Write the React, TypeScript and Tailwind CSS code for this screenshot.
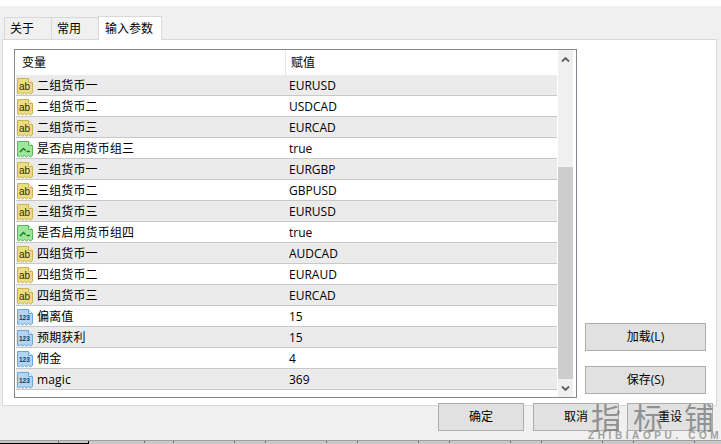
const ROWS: [string, string, string][] = [
  ['ab', '二组货币一', 'EURUSD'],
  ['ab', '二组货币二', 'USDCAD'],
  ['ab', '二组货币三', 'EURCAD'],
  ['bool', '是否启用货币组三', 'true'],
  ['ab', '三组货币一', 'EURGBP'],
  ['ab', '三组货币二', 'GBPUSD'],
  ['ab', '三组货币三', 'EURUSD'],
  ['bool', '是否启用货币组四', 'true'],
  ['ab', '四组货币一', 'AUDCAD'],
  ['ab', '四组货币二', 'EURAUD'],
  ['ab', '四组货币三', 'EURCAD'],
  ['num', '偏离值', '15'],
  ['num', '预期获利', '15'],
  ['num', '佣金', '4'],
  ['num', 'magic', '369'],
];

const TICKS = [58, 144, 173, 234, 265, 326, 357, 418, 449, 510, 541, 602, 633, 694];

const SHEET = 'M0.5 1.5H11.5L15.5 5.5V15.5L13.5 17L11.5 15.5L9.5 17L7.5 15.5L5.5 17L3.5 15.5L1.5 17L0.5 16Z';

function TypeIcon({ kind }: { kind: string }) {
  if (kind === 'bool') {
    return (
      <svg width="16" height="18" viewBox="0 0 16 18" className="shrink-0">
        <path d={SHEET} fill="#9fe59a" stroke="#58b765" />
        <path d="M11.5 1.5V5.5H15.5" fill="#e2f8df" stroke="#58b765" />
        <path d="M3 12L6.5 8.5L8.5 10.5" fill="none" stroke="#0d7a20" strokeWidth="1.4" />
        <path d="M9.5 11.5H13" fill="none" stroke="#0d7a20" strokeWidth="1.4" />
      </svg>
    );
  }
  const num = kind === 'num';
  return (
    <svg width="16" height="18" viewBox="0 0 16 18" className="shrink-0">
      <path d={SHEET} fill={num ? '#b3d5f2' : '#ecdd84'} stroke={num ? '#6aa8dc' : '#c9b450'} />
      <path d="M11.5 1.5V5.5H15.5" fill={num ? '#e6f2fb' : '#f8f2c8'} stroke={num ? '#6aa8dc' : '#c9b450'} />
      <text
        x="2"
        y={num ? 12 : 12.5}
        fontFamily="'Liberation Sans', sans-serif"
        fontSize={num ? 6.5 : 10}
        fontWeight={num ? 700 : 400}
        fill={num ? '#0f3c6a' : '#2f2a0c'}
      >
        {num ? '123' : 'ab'}
      </text>
    </svg>
  );
}

function Btn({ label, className }: { label: string; className: string }) {
  return (
    <button
      type="button"
      className={`h-[28px] border border-[#adadad] bg-[#e1e1e1] text-[12px] text-black ${className}`}
    >
      {label}
    </button>
  );
}

function Tab({ label, active, className }: { label: string; active?: boolean; className: string }) {
  return (
    <div
      className={`border border-b-0 border-[#d9d9d9] flex items-center text-[12px] text-black ${
        active ? 'h-[24px] bg-white relative z-10 -mb-px pl-[6px]' : 'h-[22px] bg-[#f0f0f0] pl-[5px]'
      } ${className}`}
    >
      {label}
    </div>
  );
}

function Chevron({ up }: { up?: boolean }) {
  return (
    <svg width="9" height="7" viewBox="0 0 9 7">
      <path d={up ? 'M1 5.5L4.5 2L8 5.5' : 'M1 1.5L4.5 5L8 1.5'} fill="none" stroke="#606060" strokeWidth="1.8" />
    </svg>
  );
}

export default function App() {
  return (
    <div className="relative w-[721px] h-[444px] overflow-hidden bg-white font-['Open_Sans','Noto_Sans_CJK_SC',sans-serif] flex flex-col">
      <div className="h-[6px] shrink-0 bg-white" />
      <div className="h-[434px] shrink-0 bg-[#f0f0f0] flex flex-col">
        <div className="h-[11px] shrink-0" />
        <div className="flex items-end pl-[4px] h-[22px] shrink-0">
          <Tab label="关于" className="w-[48px]" />
          <Tab label="常用" className="w-[48px] -ml-px" />
          <Tab label="输入参数" active className="w-[64px] -ml-px" />
        </div>
        <div className="ml-[2px] w-[715px] h-[367px] shrink-0 border border-[#d9d9d9] bg-white flex pt-[9px] pl-[11px]">
          <div className="w-[563px] h-[349px] shrink-0 border border-[#828790] bg-white flex pl-px">
            <div className="w-[541px] shrink-0 flex flex-col">
              <div className="h-[25px] shrink-0 flex text-[12px] text-black items-center">
                <div className="w-[270px] h-full pl-[6px] flex items-center border-r border-[#e5e5e5]">变量</div>
                <div className="pl-[5px]">赋值</div>
              </div>
              {ROWS.map(([kind, name, value], i) => (
                <div
                  key={i}
                  className={`h-[21px] shrink-0 flex items-center pt-px border-b border-[#c8c8c8] text-[12px] text-black ${
                    i % 2 === 0 ? 'bg-[#ebebeb]' : 'bg-white'
                  }`}
                >
                  <div className="w-[270px] pl-px flex items-center gap-[4px]">
                    <TypeIcon kind={kind} />
                    <span className="tracking-[0.15px]">{name}</span>
                  </div>
                  <div className="pl-[3px]">{value}</div>
                </div>
              ))}
            </div>
            <div className="w-[15px] ml-[1px] shrink-0 bg-[#f0f0f0] flex flex-col">
              <div className="h-[18px] shrink-0 flex items-center justify-center">
                <Chevron up />
              </div>
              <div className="h-[99px] shrink-0" />
              <div className="h-[212px] shrink-0 bg-[#cdcdcd]" />
              <div className="flex-1 flex items-center justify-center">
                <Chevron />
              </div>
            </div>
          </div>
          <div className="ml-[8px] flex flex-col gap-[15px] pt-[274px]">
            <Btn label="加载(L)" className="w-[121px]" />
            <Btn label="保存(S)" className="w-[121px]" />
          </div>
        </div>
        <div className="flex pl-[438px] gap-[9px] mt-[-3px]">
          <Btn label="确定" className="w-[86px]" />
          <Btn label="取消" className="w-[86px]" />
          <Btn label="重设" className="w-[86px] -ml-px" />
        </div>
      </div>
      <div className="relative flex-1 bg-[#c8c8c8] border-t border-[#a0a0a0]">
        <div className="w-[89px] h-full border-r border-b border-black" />
        {TICKS.map((x) => (
          <div key={x} className="absolute top-0 w-px h-[2px] bg-[#6b6b6b]" style={{ left: x }} />
        ))}
      </div>
      <div className="absolute left-[591px] top-[394px] font-['Noto_Sans_CJK_SC',sans-serif] font-normal text-[30px] leading-[44px] text-[#777777]/75 flex gap-[12px] select-none">
        <span>指</span>
        <span>标</span>
        <span className="ml-[9px]">铺</span>
      </div>
      <div className="absolute left-[588px] top-[431px] font-['Liberation_Sans',sans-serif] text-[10px] font-bold tracking-[3.6px] leading-[9px] whitespace-nowrap text-[#a0a0a0]">
        ZHIBIAOPU. COM
      </div>
    </div>
  );
}
